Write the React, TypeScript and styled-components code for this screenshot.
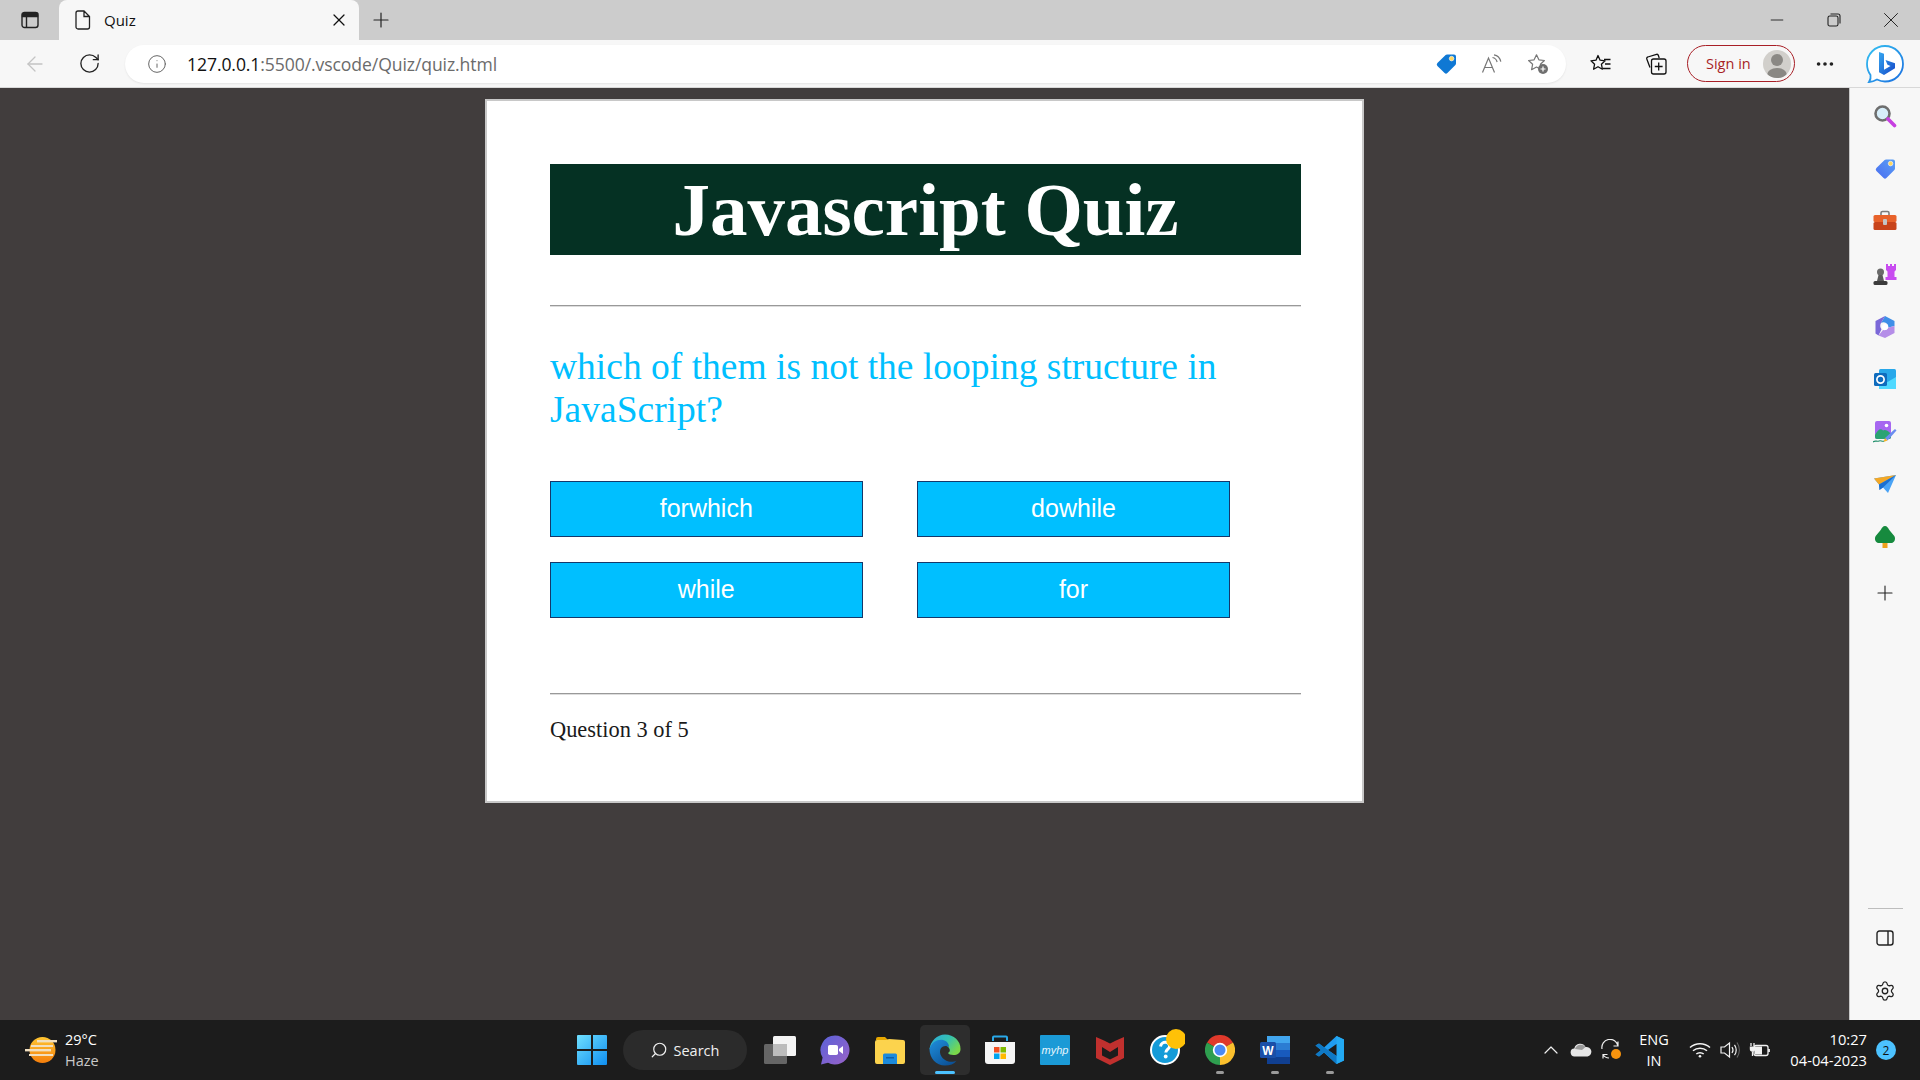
import React from 'react';
import styled, { createGlobalStyle } from 'styled-components';
import { X, Plus, Minus, ArrowLeft, RotateCw, Info, MoreHorizontal, Settings, Search, ChevronUp } from 'lucide-react';

const GlobalStyle = createGlobalStyle`
  html, body { margin: 0; padding: 0; overflow: hidden; }
  * { box-sizing: border-box; }
  body { font-family: "Open Sans", "Noto Sans", sans-serif; }
`;

const Screen = styled.div`
  width: 1920px;
  height: 1080px;
  display: flex;
  flex-direction: column;
  background: #413d3d;
`;

const TabStrip = styled.div`
  height: 40px;
  background: #cccccc;
  display: flex;
  align-items: stretch;
`;

const Slot = styled.div<{ $w: number }>`
  width: ${p => p.$w}px;
  flex: none;
  display: flex;
  align-items: center;
  justify-content: center;
`;

const Tab = styled.div`
  width: 300px;
  background: #f7f7f7;
  border-radius: 8px 8px 0 0;
  display: flex;
  align-items: center;
  padding-left: 16px;
  font-size: 15px;
  color: #111;
`;

const TabTitle = styled.span`
  margin-left: 13px;
  flex: 1;
`;

const TabClose = styled.div`
  width: 40px;
  display: flex;
  justify-content: center;
`;

const WindowControls = styled.div`
  margin-left: auto;
  display: flex;
`;

const Toolbar = styled.div`
  height: 48px;
  background: #f7f7f7;
  display: flex;
  align-items: center;
  padding: 0 5px 0 7px;
  border-bottom: 1px solid #d8d8d8;
`;

const AddressBar = styled.div`
  flex: 1;
  height: 38px;
  margin: 0 7px 0 8px;
  background: #fff;
  border-radius: 19px;
  box-shadow: 0 1px 2px rgba(0, 0, 0, 0.08);
  display: flex;
  align-items: center;
  padding: 0 5px 0 10px;
`;

const UrlText = styled.div`
  flex: 1;
  margin-left: 8px;
  font-size: 17.6px;
  letter-spacing: -0.1px;
  color: #6b6b6b;
  white-space: nowrap;
`;

const UrlHost = styled.span`
  color: #111;
`;

const SignIn = styled.div`
  width: 108px;
  height: 37px;
  margin-left: 4px;
  flex: none;
  border: 1.5px solid #a81f26;
  border-radius: 19px;
  display: flex;
  align-items: center;
  justify-content: space-between;
  padding: 0 3px 0 18px;
  font-size: 14.5px;
  color: #a81f26;
`;

const Avatar = styled.div`
  width: 28px;
  height: 28px;
  border-radius: 50%;
  background: #d1cfcb;
  overflow: hidden;
  display: flex;
`;

const Body = styled.div`
  flex: 1;
  min-height: 0;
  display: flex;
`;

const Page = styled.main`
  flex: 1;
  background: #413d3d;
`;

const Card = styled.div`
  width: 879px;
  height: 704px;
  margin: 11px auto 0;
  background: #fff;
  border: 2px solid #c8c8c8;
  padding: 63px 61px 0 63px;
  font-family: "Liberation Serif", "Times New Roman", serif;
`;

const Title = styled.h1`
  margin: 0;
  height: 91px;
  background: #053123;
  color: #fff;
  font-size: 75px;
  line-height: 91px;
  font-weight: 700;
  text-align: center;
`;

const Rule = styled.hr<{ $top: number }>`
  margin: ${p => p.$top}px 0 0;
  height: 2px;
  border: 0;
  border-top: 1px solid #999;
  border-bottom: 1px solid #ddd;
`;

const Question = styled.h2`
  margin: 38px 0 0;
  font-size: 37.5px;
  font-weight: 400;
  line-height: 43px;
  color: #00bfff;
`;

const Answers = styled.div`
  margin-top: 50px;
  display: grid;
  grid-template-columns: 312.5px 313px;
  column-gap: 54.5px;
  row-gap: 25px;
`;

const AnswerButton = styled.button`
  height: 56px;
  padding: 0 0 1px;
  background: #00bfff;
  border: 1px solid #14386b;
  color: #fff;
  font-family: "Liberation Sans", Arial, sans-serif;
  font-size: 25px;
`;

const Progress = styled.div`
  margin-top: 22px;
  font-size: 22.4px;
  line-height: 26px;
  color: #1a1a1a;
`;

const Sidebar = styled.aside`
  width: 71px;
  flex: none;
  background: #f7f7f7;
  border-left: 1px solid #c8c8c8;
  display: flex;
  flex-direction: column;
  align-items: center;
  padding: 2px 0 3px;
`;

const SideItem = styled.div`
  height: 52.6px;
  width: 100%;
  flex: none;
  display: flex;
  align-items: center;
  justify-content: center;
`;

const SideAdd = styled(SideItem)`
  margin-top: 3px;
`;

const SideRule = styled.div`
  margin-top: auto;
  width: 35px;
  height: 1px;
  background: #bdbdbd;
  margin-bottom: 3px;
`;

const Taskbar = styled.footer`
  height: 60px;
  flex: none;
  background: #1c1c1c;
  display: flex;
  align-items: center;
  color: #fff;
`;

const Weather = styled.div`
  width: 564px;
  flex: none;
  display: flex;
  align-items: center;
  padding-left: 25px;
  gap: 6px;
`;

const WeatherText = styled.div`
  font-size: 14.5px;
  line-height: 21px;
`;

const Muted = styled.div`
  color: #c9c9c9;
`;

const TaskIcon = styled.div<{ $active?: boolean; $dot?: boolean }>`
  position: relative;
  width: 50px;
  height: 50px;
  margin: 0 2.5px;
  flex: none;
  display: flex;
  align-items: center;
  justify-content: center;
  border-radius: 5px;
  background: ${p => (p.$active ? '#2d2d2d' : 'transparent')};
  &::after {
    content: '';
    display: ${p => (p.$active || p.$dot ? 'block' : 'none')};
    position: absolute;
    bottom: 1px;
    left: 50%;
    transform: translateX(-50%);
    width: ${p => (p.$active ? 20 : 8)}px;
    height: 3px;
    border-radius: 2px;
    background: ${p => (p.$active ? '#4cc2ff' : '#9a9a9a')};
  }
`;

const SearchPill = styled.div`
  width: 124px;
  height: 40px;
  margin: 0 6px 0 3.5px;
  flex: none;
  border-radius: 20px;
  background: #2b2b2b;
  display: flex;
  align-items: center;
  justify-content: center;
  gap: 6px;
  font-size: 14.5px;
  color: #f0f0f0;
`;

const Tray = styled.div`
  margin-left: auto;
  display: flex;
  align-items: center;
`;

const TraySlot = styled(Slot)`
  height: 40px;
`;

const Lang = styled.div`
  width: 56px;
  text-align: center;
  font-size: 14.5px;
  line-height: 21px;
  margin-right: 3px;
`;

const Clock = styled.div`
  width: 85px;
  margin-left: 7px;
  text-align: right;
  font-size: 14.7px;
  line-height: 21px;
`;

const Badge = styled.div`
  width: 20px;
  height: 20px;
  margin: 0 24px 0 9px;
  border-radius: 50%;
  background: #4cc2ff;
  color: #111;
  font-size: 12px;
  display: flex;
  align-items: center;
  justify-content: center;
`;

const SidebarToggleIcon = () => (
  <svg width="18" height="18" viewBox="0 0 18 18" fill="none" stroke="#222" strokeWidth="1.4">
    <rect x="1" y="1.5" width="16" height="15" rx="2.5" />
    <path d="M1.5 2.5h15v3h-15z" fill="#222" />
    <path d="M5.5 5v11" />
  </svg>
);

const PageIcon = () => (
  <svg width="16" height="20" viewBox="0 0 16 20" fill="none" stroke="#222" strokeWidth="1.3">
    <path d="M3 1h6l5.5 5.5V17a2 2 0 0 1-2 2H3a2 2 0 0 1-2-2V3a2 2 0 0 1 2-2zM9 1v5.5h5.5" />
  </svg>
);

const RestoreIcon = () => (
  <svg width="14" height="14" viewBox="0 0 14 14" fill="none" stroke="#222" strokeWidth="1.1">
    <rect x="1" y="3" width="10" height="10" rx="1.8" />
    <path d="M3.5 1H11a2 2 0 0 1 2 2v7.5" />
  </svg>
);

const TagIcon = ({ c1 = '#0f78d4', c2 = '#0f78d4', id = 'tag', size = 22 }) => (
  <svg width={size} height={size} viewBox="0 0 22 22">
    <defs>
      <linearGradient id={id} x1="0" y1="1" x2="1" y2="0">
        <stop offset="0" stopColor={c1} />
        <stop offset="1" stopColor={c2} />
      </linearGradient>
    </defs>
    <path d="M12 1.5h7a2 2 0 0 1 2 2v7a2 2 0 0 1-.6 1.4l-8 8.2a2 2 0 0 1-2.8 0l-7.2-7.2a2 2 0 0 1 0-2.8l8.2-8A2 2 0 0 1 12 1.5z" fill={`url(#${id})`} />
    <circle cx="16.6" cy="5.6" r="2.3" fill="#ffd75e" stroke="#fff" strokeWidth=".6" />
  </svg>
);

const ReadAloudIcon = () => (
  <svg width="22" height="20" viewBox="0 0 22 20" fill="none" stroke="#777" strokeWidth="1.2">
    <path d="M1.5 18.5 7.5 4l6 14.5M3.6 13.5h7.8" />
    <path d="M11.5 3.5c2.5.5 4 2 4.6 4.5M13 .8c3.600.6 6 3 6.800 6.800" />
  </svg>
);

const StarAddIcon = () => (
  <svg width="22" height="22" viewBox="0 0 22 22" fill="none">
    <path d="M9.500 1.800l2.400 5 5.500.7-4 3.800 1 5.400-4.900-2.700-4.900 2.700 1-5.400-4-3.800 5.500-.7z" stroke="#777" strokeWidth="1.2" strokeLinejoin="round" />
    <circle cx="16" cy="16" r="5" fill="#6f6f6f" />
    <path d="M16 13.500v5M13.500 16h5" stroke="#fff" strokeWidth="1.2" />
  </svg>
);

const FavoritesIcon = () => (
  <svg width="22" height="20" viewBox="0 0 22 20" fill="none" stroke="#111" strokeWidth="1.3" strokeLinejoin="round">
    <path d="M8 1.500l2.100 4.700 5 .6-3.700 3.400 1 5-4.400-2.500-4.400 2.500 1-5L1 6.800l5-.6z" />
    <path d="M14 5.500h6.500M15 10h5.500M13 14.500h7.500" />
  </svg>
);

const CollectionsIcon = () => (
  <svg width="22" height="22" viewBox="0 0 22 22" fill="none" stroke="#111" strokeWidth="1.3">
    <path d="M5 14.500 1.800 6a1.500 1.500 0 0 1 1-2L11.500 1.300a1.500 1.500 0 0 1 1.800 1l.9 2.700" />
    <rect x="6.500" y="6" width="14.500" height="15" rx="2" />
    <path d="M13.700 9.500v8M9.800 13.500h7.800" />
  </svg>
);

const AvatarFigure = () => (
  <svg width="28" height="28" viewBox="0 0 28 28" fill="#8a8884">
    <circle cx="14" cy="10" r="6" />
    <ellipse cx="14" cy="25" rx="10" ry="7" />
  </svg>
);

const BingIcon = () => (
  <svg width="40" height="40" viewBox="0 0 40 40" fill="none">
    <defs>
      <linearGradient id="bingRing" x1="0" y1="0" x2="1" y2="1">
        <stop offset="0" stopColor="#35c1f1" />
        <stop offset="1" stopColor="#1b6fe0" />
      </linearGradient>
      <linearGradient id="bingB" x1="0" y1="0" x2="1" y2="1">
        <stop offset="0" stopColor="#36a8f0" />
        <stop offset="1" stopColor="#1447c8" />
      </linearGradient>
    </defs>
    <path d="M20 2c10 0 18 8 18 18s-8 17.500-18 17.500c-3 0-5.500-.7-8-2-2.500 1.500-5 2.300-8 2.500 1.300-2 2-4.500 1.500-7C3 27.500 2 24 2 20 2 10 10 2 20 2z" stroke="url(#bingRing)" strokeWidth="1.800" fill="#fff" />
    <path d="M14 8l5 1.800v16l6.500-3.700-3-1.400-2-4.700 9.500 3.300v5L19 31l-5-2.800z" fill="url(#bingB)" />
  </svg>
);

const MagnifierIcon = () => (
  <svg width="24" height="24" viewBox="0 0 24 24">
    <circle cx="9.500" cy="9.500" r="7" fill="#d7eefa" stroke="#6e6e6e" strokeWidth="2.600" />
    <path d="M15 15l6.500 6.500" stroke="#c63fe0" strokeWidth="3.600" strokeLinecap="round" />
  </svg>
);

const ToolboxIcon = () => (
  <svg width="24" height="22" viewBox="0 0 24 22">
    <path d="M8 6V3a1.500 1.500 0 0 1 1.500-1.500h5A1.500 1.500 0 0 1 16 3v3" fill="none" stroke="#7c7c7c" strokeWidth="1.600" />
    <rect x=".5" y="5" width="23" height="7" rx="1.500" fill="#e8622a" />
    <rect x=".5" y="12" width="23" height="8" rx="1.500" fill="#c8431a" />
    <rect x="10" y="9" width="4" height="6" rx="1" fill="#c4c4c4" />
  </svg>
);

const ChessIcon = () => (
  <svg width="24" height="24" viewBox="0 0 24 24">
    <path d="M13 2h2v2h2V2h2v2h2V2h2v6l-1.500 1.500V15h2v3H12.500v-3h2V9.500L13 8z" fill="#c84cf0" />
    <circle cx="7.500" cy="10" r="3.500" fill="#6a6a6a" />
    <path d="M5.500 13h4l1.500 6H4z" fill="#5a5a5a" />
    <rect x=".5" y="19" width="14" height="4" rx="1.500" fill="#3c3c3c" />
  </svg>
);

const M365Icon = () => (
  <svg width="22" height="24" viewBox="0 0 22 24">
    <path d="M11 1 20.500 6v5l-6 1.500A5 5 0 0 0 7 8z" fill="#3f8fe8" />
    <path d="M1.500 6 11 1 7 8c-1.200 2-1 4.500.5 6.200l-3 6.300-3-2z" fill="#7b68d8" />
    <path d="M20.500 11v7L11 23l-6.500-2.500L9 15a5 5 0 0 0 5.500-2.500z" fill="#b58ee8" />
    <circle cx="11" cy="12" r="3" fill="#fff" />
  </svg>
);

const OutlookIcon = () => (
  <svg width="22" height="22" viewBox="0 0 22 22">
    <rect x="5" y="1" width="17" height="20" rx="1.500" fill="#28a8ea" />
    <path d="M5 9l8.500 5L22 9v12H5z" fill="#50d9ff" />
    <rect y="5" width="13" height="13" rx="1.500" fill="#0f6cbd" />
    <circle cx="6.500" cy="11.500" r="3.600" fill="none" stroke="#fff" strokeWidth="1.700" />
  </svg>
);

const DesignerIcon = () => (
  <svg width="24" height="24" viewBox="0 0 24 24">
    <rect x="2" y="1" width="16" height="18" rx="2" fill="#a667f0" />
    <circle cx="13.500" cy="5.500" r="1.800" fill="#fff" />
    <path d="M2 15c3-6 6-7 8-4.500 1.500-1 4-1 8 3.500v3a2 2 0 0 1-2 2H4a2 2 0 0 1-2-2z" fill="#2aa372" />
    <path d="M12 18l10-9 1.500 1.500-9 10z" fill="#6a8cf0" />
    <path d="M12 18l2.500 2.500-4 1.500z" fill="#f5b324" />
    <path d="M0 22c2-2 4 0 6-1s3 1 5 0" stroke="#1f8f6a" strokeWidth="1.200" fill="none" />
  </svg>
);

const PlaneIcon = () => (
  <svg width="24" height="20" viewBox="0 0 24 20">
    <path d="M1 4.500 23 1 15 19 10 13.500 6.500 16 6 10.500z" fill="#4aa3f5" />
    <path d="M1 4.500 23 1 6 10.500z" fill="#f4a826" />
    <path d="M6 10.500 23 1 10 13.500 6.500 16z" fill="#1c6fd0" />
  </svg>
);

const TreeIcon = () => (
  <svg width="22" height="22" viewBox="0 0 22 22">
    <rect x="8.500" y="16" width="5" height="6" fill="#f0a21c" />
    <path d="M11 0c2 0 3.200 2 4 3.500 1 1.800 3 3.500 5.300 6.500 1.500 2.300.7 6.500-2.800 7H4.500C1 16.500.2 12.300 1.700 10 4 7 6 5.300 7 3.500 7.800 2 9 0 11 0z" fill="#168a3e" />
  </svg>
);

const PanelIcon = () => (
  <svg width="18" height="16" viewBox="0 0 18 16" fill="none" stroke="#222" strokeWidth="1.400">
    <rect x="1" y="1" width="16" height="14" rx="2.500" />
    <path d="M12 1v14" />
  </svg>
);

const SunHazeIcon = () => (
  <svg width="34" height="30" viewBox="0 0 34 30">
    <defs>
      <linearGradient id="sun" x1="0" y1="0" x2="0" y2="1">
        <stop offset="0" stopColor="#ffc531" />
        <stop offset="1" stopColor="#f57f0c" />
      </linearGradient>
    </defs>
    <circle cx="17.500" cy="15" r="13" fill="url(#sun)" />
    <g fill="#f1dfc0">
      <rect x="12" y="5" width="20" height="2.400" />
      <rect x="6" y="10" width="22" height="2" />
      <rect x="0" y="14" width="26" height="2.400" />
      <rect x="20" y="14" width="6" height="2" />
      <rect x="4" y="19" width="24" height="2" />
    </g>
  </svg>
);

const WindowsIcon = () => (
  <svg width="30" height="30" viewBox="0 0 30 30">
    <defs>
      <linearGradient id="win" x1="0" y1="0" x2="1" y2="1">
        <stop offset="0" stopColor="#6fe0ff" />
        <stop offset="1" stopColor="#0f8ef0" />
      </linearGradient>
    </defs>
    <path d="M0 1a1 1 0 0 1 1-1h13v14H0zM16 0h13a1 1 0 0 1 1 1v13H16zM0 16h14v14H1a1 1 0 0 1-1-1zM16 16h14v13a1 1 0 0 1-1 1H16z" fill="url(#win)" />
  </svg>
);

const TaskViewIcon = () => (
  <svg width="32" height="28" viewBox="0 0 32 28">
    <rect x="9" y="0" width="23" height="20" rx="1.500" fill="#f4f4f4" />
    <rect x="0" y="8" width="23" height="20" rx="1.500" fill="#6b6b6b" fillOpacity=".92" />
    <rect x="9" y="8" width="14" height="12" fill="#bcbcbc" />
  </svg>
);

const TeamsChatIcon = () => (
  <svg width="30" height="30" viewBox="0 0 30 30">
    <defs>
      <linearGradient id="chat" x1="0" y1="0" x2="1" y2="1">
        <stop offset="0" stopColor="#5a62d8" />
        <stop offset="1" stopColor="#9a62c8" />
      </linearGradient>
    </defs>
    <path d="M15 .5a14.500 14.500 0 1 1-7 27.200L1 29.500l1.600-7A14.500 14.500 0 0 1 15 .5z" fill="url(#chat)" />
    <rect x="8" y="10" width="10" height="10" rx="1.800" fill="#fff" />
    <path d="M19 14l4-3v8l-4-3z" fill="#fff" />
  </svg>
);

const FolderIcon = () => (
  <svg width="30" height="28" viewBox="0 0 30 28">
    <path d="M1 3a2 2 0 0 1 2-2h7l3 3h-12z" fill="#e6a700" />
    <path d="M0 6a2 2 0 0 1 2-2h9l3-1 14 1a2 2 0 0 1 2 2v20a2 2 0 0 1-2 2H2a2 2 0 0 1-2-2z" fill="#fcd34d" />
    <path d="M8 19a1.500 1.500 0 0 1 1.500-1.500h11a1.500 1.500 0 0 1 1.500 1.500v9H8z" fill="#1c8adb" />
    <rect x="11" y="21" width="8" height="1.500" fill="#0f5fa8" />
  </svg>
);

const EdgeIcon = () => (
  <svg width="32" height="32" viewBox="0 0 32 32">
    <defs>
      <linearGradient id="edgeTop" x1="0" y1="0" x2="1" y2=".6">
        <stop offset="0" stopColor="#2aa8e0" />
        <stop offset=".55" stopColor="#35c1b0" />
        <stop offset="1" stopColor="#7ad84a" />
      </linearGradient>
      <linearGradient id="edgeBody" x1="0" y1="0" x2=".8" y2="1">
        <stop offset="0" stopColor="#1f8fdc" />
        <stop offset="1" stopColor="#0b4f94" />
      </linearGradient>
    </defs>
    <path d="M16 .5c9 0 15.500 6.500 15.500 14.500 0 4-3 6-7 6-3 0-5-1-5.500-2 2-1 2.500-3 1-5-2-3-7-4-11-2.500C5 13 2.500 14.500.5 15 1.500 7 8 .5 16 .5z" fill="url(#edgeTop)" />
    <path d="M.5 15C2.500 8 9 5 14 6c4 1 6 4 6 7-3-2-7-1-8.500 2-2 5 2 11 8 12.500 3 .7 6 .2 8-.8-2.500 3.300-6.500 4.800-11.500 4.800C7 31.500.5 24 .5 15z" fill="url(#edgeBody)" />
  </svg>
);

const StoreIcon = () => (
  <svg width="30" height="30" viewBox="0 0 30 30">
    <path d="M8 6V2.500A1 1 0 0 1 9 1.500h12a1 1 0 0 1 1 1V6" fill="none" stroke="#29a8e8" strokeWidth="2" />
    <path d="M0 7h30v19a3 3 0 0 1-3 3H3a3 3 0 0 1-3-3z" fill="#f5f5f5" />
    <rect x="9" y="12" width="5.500" height="5.500" fill="#f25022" />
    <rect x="15.500" y="12" width="5.500" height="5.500" fill="#7fba00" />
    <rect x="9" y="18.500" width="5.500" height="5.500" fill="#00a4ef" />
    <rect x="15.500" y="18.500" width="5.500" height="5.500" fill="#ffb900" />
  </svg>
);

const MyHpIcon = () => (
  <svg width="30" height="30" viewBox="0 0 30 30">
    <rect width="30" height="30" rx="1" fill="#1b9ad6" />
    <text x="15" y="19" textAnchor="middle" fontSize="11" fontStyle="italic" fill="#e8f6fd" fontFamily="Liberation Sans, sans-serif">myhp</text>
  </svg>
);

const McAfeeIcon = () => (
  <svg width="28" height="30" viewBox="0 0 28 30">
    <path fillRule="evenodd" d="M0 2l8 3.500 6 3 6-3L28 2v21l-14 7-14-7zM6 12v8.500l8 4 8-4V12l-8 5z" fill="#c1302e" />
  </svg>
);

const HelpIcon = () => (
  <svg width="40" height="44" viewBox="0 0 40 44">
    <circle cx="20" cy="22" r="14" fill="#149bd8" stroke="#fff" strokeWidth="2" />
    <path d="M15.500 18.500c.5-3 3-4.500 5.300-4.200 2.700.3 4 2.200 3.700 4.300-.3 2.400-3.500 3-3.700 5.900" fill="none" stroke="#fff" strokeWidth="3" />
    <circle cx="20.700" cy="28.500" r="1.900" fill="#fff" />
    <circle cx="31" cy="11" r="10" fill="#ffc107" />
  </svg>
);

const ChromeIcon = () => (
  <svg width="30" height="30" viewBox="0 0 30 30">
    <path d="M15 15 2 7.500A15 15 0 0 1 28 7.500z" fill="#e0392b" />
    <path d="M15 15 28 7.500A15 15 0 0 1 15 30z" fill="#fbc02d" />
    <path d="M15 15v15A15 15 0 0 1 2 7.500z" fill="#2e9e4f" />
    <circle cx="15" cy="15" r="7.200" fill="#fff" />
    <circle cx="15" cy="15" r="5.500" fill="#4a8af4" />
  </svg>
);

const WordIcon = () => (
  <svg width="30" height="28" viewBox="0 0 30 28">
    <rect x="7" y="0" width="23" height="28" rx="1.500" fill="#2b7cd3" />
    <rect x="7" y="0" width="23" height="7" fill="#41a5ee" />
    <rect x="7" y="14" width="23" height="7" fill="#185abd" />
    <rect x="7" y="21" width="23" height="7" fill="#103f91" />
    <rect x="0" y="6" width="16" height="16" rx="1.500" fill="#1a4fa8" />
    <text x="8" y="18.500" textAnchor="middle" fontSize="12" fontWeight="700" fill="#fff" fontFamily="Liberation Sans, sans-serif">W</text>
  </svg>
);

const VscodeIcon = () => (
  <svg width="30" height="30" viewBox="0 0 30 30">
    <path d="M21.500 1 29 4.500v21L21.500 29 9 17.500l-5 4-3.500-2L6 15 .5 10.500 4 8.500l5 4z" fill="#1f9cf0" />
    <path d="M21.500 1 29 4.500v21L21.500 29z" fill="#23a9f2" />
    <path d="M21.500 9 13 15l8.500 6z" fill="#1c1c1c" />
    <path d="M.5 10.500 4 8.500 21.500 21v8L9 17.500 4 21.500.5 19.500 6 15z" fill="#0f78c4" />
  </svg>
);

const CloudIcon = () => (
  <svg width="22" height="14" viewBox="0 0 22 14">
    <path d="M5 13.500a4 4 0 0 1-.7-8A6 6 0 0 1 15.500 4 4.800 4.800 0 0 1 17.500 13.500z" fill="#e6e6e6" />
    <path d="M5 6a6 6 0 0 1 10.500-2l-3.500 3z" fill="#9a9a9a" />
  </svg>
);

const SyncIcon = () => (
  <svg width="22" height="22" viewBox="0 0 22 22" fill="none" stroke="#eee" strokeWidth="1.200">
    <path d="M2 10A8 8 0 0 1 18 7M18 2.500V7h-4.500" />
    <path d="M3 19.500V15.500h4.500M3 15.500c1.500 2.500 4 3.500 6 3.500" />
    <circle cx="16" cy="15" r="5" fill="#f7930e" stroke="none" />
  </svg>
);

const WifiIcon = () => (
  <svg width="22" height="16" viewBox="0 0 22 16" fill="none" stroke="#f2f2f2" strokeWidth="1.500">
    <path d="M1 5.500C6.500.5 15.500.5 21 5.500M4 8.800c4-3.500 10-3.500 14 0M7.300 12c2-1.800 5.400-1.800 7.400 0" />
    <circle cx="11" cy="14.300" r="1.300" fill="#f2f2f2" stroke="none" />
  </svg>
);

const VolumeIcon = () => (
  <svg width="20" height="18" viewBox="0 0 20 18" fill="none" stroke="#f2f2f2" strokeWidth="1.200">
    <path d="M1 6h3.500L9.500 2v14l-5-4H1z" />
    <path d="M12 6c1.200 1.800 1.200 4.200 0 6M14.500 3.800c2 3 2 7.400 0 10.400" />
    <path d="M17 1.500c3 4.500 3 10.500 0 15" stroke="#666" />
  </svg>
);

const BatteryIcon = () => (
  <svg width="22" height="16" viewBox="0 0 22 16" fill="none" stroke="#f2f2f2" strokeWidth="1.300">
    <rect x="5" y="3.500" width="14" height="10" rx="2" />
    <rect x="6" y="4.500" width="7" height="8" fill="#f2f2f2" stroke="none" />
    <path d="M20 7v3" strokeWidth="1.800" />
    <path d="M2 1v3M5 1v3" />
    <path d="M.8 4.500h5.400V7a2.700 2.700 0 0 1-5.400 0z" fill="#f2f2f2" stroke="none" />
    <path d="M3.500 9.500V14" />
  </svg>
);

const sideIcons = [
  <MagnifierIcon key="search" />,
  <TagIcon key="tag" id="sideTag" c1="#4a6cf0" c2="#5aa0f5" />,
  <ToolboxIcon key="tools" />,
  <ChessIcon key="games" />,
  <M365Icon key="m365" />,
  <OutlookIcon key="outlook" />,
  <DesignerIcon key="designer" />,
  <PlaneIcon key="drop" />,
  <TreeIcon key="tree" />,
];

const taskIcons = [
  { key: 'taskview', icon: <TaskViewIcon /> },
  { key: 'chat', icon: <TeamsChatIcon /> },
  { key: 'files', icon: <FolderIcon /> },
  { key: 'edge', icon: <EdgeIcon />, active: true },
  { key: 'store', icon: <StoreIcon /> },
  { key: 'myhp', icon: <MyHpIcon /> },
  { key: 'mcafee', icon: <McAfeeIcon /> },
  { key: 'help', icon: <HelpIcon /> },
  { key: 'chrome', icon: <ChromeIcon />, dot: true },
  { key: 'word', icon: <WordIcon />, dot: true },
  { key: 'vscode', icon: <VscodeIcon />, dot: true },
];

const answers = ['forwhich', 'dowhile', 'while', 'for'];

const App: React.FC = () => {
  return (
    <Screen>
      <GlobalStyle />
      <TabStrip>
        <Slot $w={59}><SidebarToggleIcon /></Slot>
        <Tab>
          <PageIcon />
          <TabTitle>Quiz</TabTitle>
          <TabClose><X size={20} color="#111" strokeWidth={1.5} /></TabClose>
        </Tab>
        <Slot $w={44}><Plus size={24} color="#222" strokeWidth={1.2} /></Slot>
        <WindowControls>
          <Slot $w={57}><Minus size={20} color="#222" strokeWidth={1.1} /></Slot>
          <Slot $w={57}><RestoreIcon /></Slot>
          <Slot $w={58}><X size={26} color="#222" strokeWidth={0.9} /></Slot>
        </WindowControls>
      </TabStrip>

      <Toolbar>
        <Slot $w={55}><ArrowLeft size={24} color="#c4c4c4" strokeWidth={1.3} /></Slot>
        <Slot $w={55}><RotateCw size={23} color="#222" strokeWidth={1.4} /></Slot>
        <AddressBar>
          <Slot $w={44}><Info size={20} color="#666" strokeWidth={1.2} /></Slot>
          <UrlText><UrlHost>127.0.0.1</UrlHost>:5500/.vscode/Quiz/quiz.html</UrlText>
          <Slot $w={46}><TagIcon /></Slot>
          <Slot $w={46}><ReadAloudIcon /></Slot>
          <Slot $w={46}><StarAddIcon /></Slot>
        </AddressBar>
        <Slot $w={55}><FavoritesIcon /></Slot>
        <Slot $w={55}><CollectionsIcon /></Slot>
        <SignIn>
          Sign in
          <Avatar><AvatarFigure /></Avatar>
        </SignIn>
        <Slot $w={60}><MoreHorizontal size={22} color="#222" strokeWidth={2} /></Slot>
        <Slot $w={60}><BingIcon /></Slot>
      </Toolbar>

      <Body>
        <Page>
          <Card>
            <Title>Javascript Quiz</Title>
            <Rule $top={50} />
            <Question>which of them is not the looping structure in JavaScript?</Question>
            <Answers>
              {answers.map(answer => (
                <AnswerButton key={answer}>{answer}</AnswerButton>
              ))}
            </Answers>
            <Rule $top={75} />
            <Progress>Question 3 of 5</Progress>
          </Card>
        </Page>
        <Sidebar>
          {sideIcons.map(icon => (
            <SideItem key={icon.key}>{icon}</SideItem>
          ))}
          <SideAdd><Plus size={24} color="#222" strokeWidth={1.1} /></SideAdd>
          <SideRule />
          <SideItem><PanelIcon /></SideItem>
          <SideItem><Settings size={22} color="#222" strokeWidth={1.4} /></SideItem>
        </Sidebar>
      </Body>

      <Taskbar>
        <Weather>
          <SunHazeIcon />
          <WeatherText>
            29°C
            <Muted>Haze</Muted>
          </WeatherText>
        </Weather>
        <TaskIcon><WindowsIcon /></TaskIcon>
        <SearchPill><Search size={18} strokeWidth={1.6} style={{ transform: 'scaleX(-1)' }} />Search</SearchPill>
        {taskIcons.map(item => (
          <TaskIcon key={item.key} $active={item.active} $dot={item.dot}>{item.icon}</TaskIcon>
        ))}
        <Tray>
          <TraySlot $w={30}><ChevronUp size={24} color="#eee" strokeWidth={1.2} /></TraySlot>
          <TraySlot $w={30}><CloudIcon /></TraySlot>
          <TraySlot $w={30}><SyncIcon /></TraySlot>
          <Lang>ENG<br />IN</Lang>
          <TraySlot $w={30}><WifiIcon /></TraySlot>
          <TraySlot $w={30}><VolumeIcon /></TraySlot>
          <TraySlot $w={30}><BatteryIcon /></TraySlot>
          <Clock>10:27<br />04-04-2023</Clock>
          <Badge>2</Badge>
        </Tray>
      </Taskbar>
    </Screen>
  );
};

export default App;
